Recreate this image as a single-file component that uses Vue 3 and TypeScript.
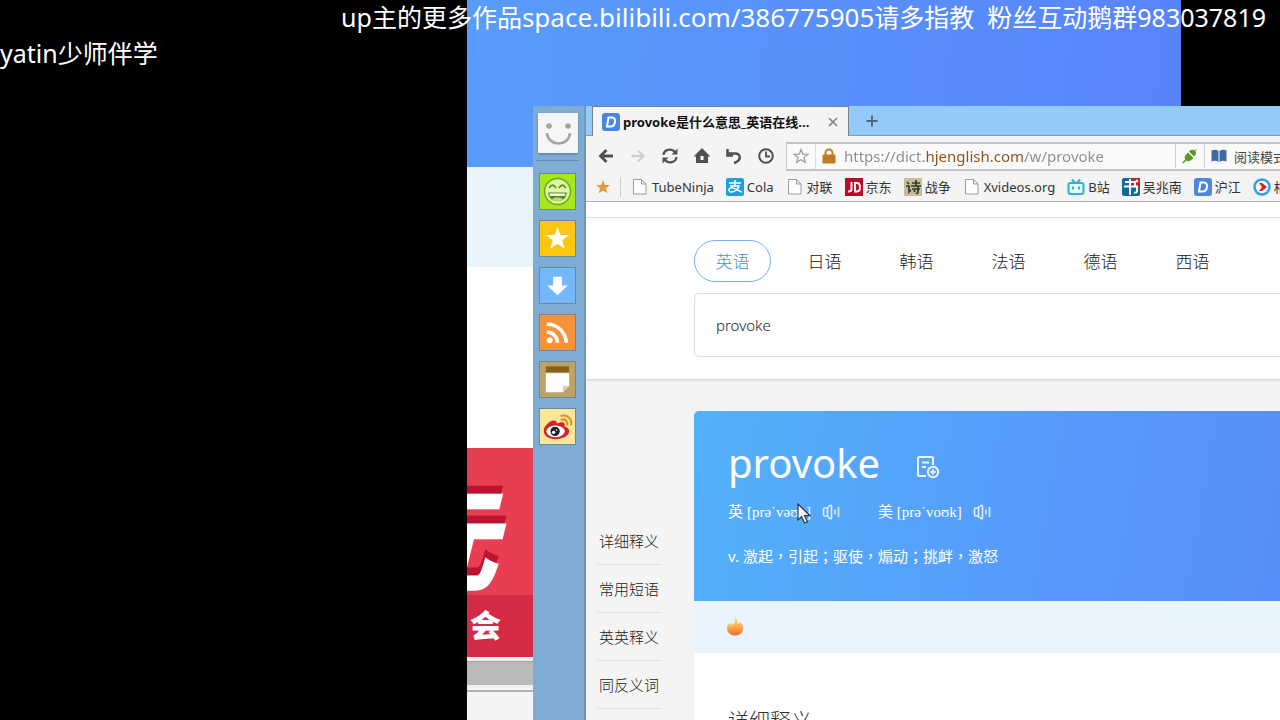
<script setup lang="ts">
import { ref } from 'vue'

interface Bookmark {
  icon: string
  label: string
}

const bookmarks: Bookmark[] = [
  { icon: 'file', label: 'TubeNinja' },
  { icon: 'pay', label: 'Cola' },
  { icon: 'file', label: '对联' },
  { icon: 'jd', label: '京东' },
  { icon: 'poem', label: '战争' },
  { icon: 'file', label: 'Xvideos.org' },
  { icon: 'tv', label: 'B站' },
  { icon: 'book', label: '吴兆南' },
  { icon: 'dict', label: '沪江' },
  { icon: 'play', label: '相声' },
]

const languages: string[] = ['英语', '日语', '韩语', '法语', '德语', '西语']
const activeLanguage = ref<string>('英语')
const sections: string[] = ['详细释义', '常用短语', '英英释义', '同反义词']
const address = ref<string>('https://dict.hjenglish.com/w/provoke')
const query = ref<string>('provoke')
</script>

<template>
  <div class="desktop">
    <div class="back-window">
      <div class="back-hero"></div>
      <div class="back-band"></div>
      <div class="back-blank"></div>
      <div class="banner">
        <div class="banner-top"><span>元</span></div>
        <div class="banner-bottom">会</div>
      </div>
      <div class="back-scroll"></div>
      <div class="back-foot"></div>
    </div>

    <div class="browser">
      <aside class="rail">
        <button class="avatar" aria-label="账户">
          <svg viewBox="0 0 40 40" width="40" height="40">
            <circle cx="11" cy="13" r="2.800" fill="#a5a5a5" /><circle cx="30" cy="13" r="2.800" fill="#a5a5a5" />
            <path d="M9 20c1 14 22 14 23 0" fill="none" stroke="#a5a5a5" stroke-width="2.600" />
          </svg>
        </button>
        <div class="rail-list">
          <button class="tile lime" aria-label="笑脸">
            <svg viewBox="0 0 36 36">
              <circle cx="18" cy="18" r="13.3" fill="#dff7a4" stroke="#71a823" stroke-width="1.5" />
              <path d="M9.500 14.500q3.500-6 7 0M19.500 14.500q3.500-6 7 0" fill="none" stroke="#5f8c1d" stroke-width="1.700" />
              <path d="M8.500 19h19c0 12-19 12-19 0z" fill="#548a19" />
              <path d="M10 20h16v2.500H10z" fill="#fff" /><path d="M12 26q6-4 12 0-6 4-12 0z" fill="#b9df68" />
            </svg>
          </button>
          <button class="tile yellow" aria-label="收藏">
            <svg viewBox="0 0 36 36"><path d="M18 6l3 8.400h9l-7.200 5.400 2.700 8.700L18 23.300l-7.500 5.200 2.700-8.700L6 14.400h9z" fill="#fff" /></svg>
          </button>
          <button class="tile sky" aria-label="下载">
            <svg viewBox="0 0 36 36"><path d="M13.500 9h9v9h6L18 28 7.500 18h6z" fill="#fff" /></svg>
          </button>
          <button class="tile orange" aria-label="订阅">
            <svg viewBox="0 0 36 36">
              <circle cx="10" cy="26" r="3" fill="#fff" />
              <path d="M7 17.500a11 11 0 0 1 11 11M7 9.500a19.500 19.500 0 0 1 20 19" fill="none" stroke="#fff" stroke-width="3.600" />
            </svg>
          </button>
          <button class="tile tan" aria-label="便签">
            <svg viewBox="0 0 36 36">
              <path d="M6 4.500h24v6H6z" fill="#866319" /><path d="M6 11.500h24v13L23.500 31H6z" fill="#fff" />
              <path d="M30 24.500h-6.500V31z" fill="#d8cdb9" />
            </svg>
          </button>
          <button class="tile cream" aria-label="微博">
            <svg viewBox="0 0 36 36">
              <path d="M4 23c-1-5 7-12 11-11 3 0 2 3 2 3s7-3 8 0c1 2 0 3 0 3s5 1 5 5c0 5-7 8-14 8S4 28 4 23z" fill="#d12329" />
              <ellipse cx="16" cy="23" rx="9.500" ry="6" fill="#fff" />
              <circle cx="15.500" cy="23" r="4.800" fill="#222" /><circle cx="14" cy="24" r="1.700" fill="#fff" /><circle cx="17" cy="21.500" r="0.800" fill="#fff" />
              <path d="M22 11c4-1 6 1 6 5M22 7c6-1.500 11 3 10 9" fill="none" stroke="#df931d" stroke-width="2.200" stroke-linecap="round" />
            </svg>
          </button>
        </div>
      </aside>

      <div class="view">
        <div class="tab-strip">
          <div class="tab">
            <svg class="mark" viewBox="0 0 18 18"><rect width="18" height="18" rx="3" fill="#4c86de" /><path d="M6.500 4.500h3.500c5 0 3.500 9-1.500 9H5z" fill="none" stroke="#fff" stroke-width="2" /></svg>
            <span class="tab-title">provoke是什么意思_英语在线...</span>
            <button class="plain tab-close" aria-label="关闭标签页">
              <svg viewBox="0 0 10 10" width="10" height="10"><path d="M1 1l8 8M9 1l-8 8" stroke="#858585" stroke-width="1.700" /></svg>
            </button>
          </div>
          <button class="plain new-tab" aria-label="新建标签页">
            <svg viewBox="0 0 12 12" width="12" height="12"><path d="M6 0.500v11M0.500 6h11" stroke="#53636f" stroke-width="1.800" /></svg>
          </button>
        </div>

        <div class="toolbar">
          <div class="nav">
            <button class="plain" aria-label="后退"><svg viewBox="0 0 18 18"><path d="M16 9H4M9.500 3L3.500 9l6 6" fill="none" stroke="#505050" stroke-width="2.800" /></svg></button>
            <button class="plain" aria-label="前进"><svg viewBox="0 0 18 18"><path d="M2.500 9H14M9 3.500L14.500 9 9 14.500" fill="none" stroke="#cfcfcf" stroke-width="2.300" /></svg></button>
            <button class="plain" aria-label="刷新"><svg viewBox="0 0 18 18"><path d="M2.500 8c.5-5.500 8-7 11.500-3M15.500 10c-.5 5.500-8 7-11.500 3" fill="none" stroke="#505050" stroke-width="2.300" /><path d="M16.500 1.500v6h-6zM1.500 16.500v-6h6z" fill="#505050" /></svg></button>
            <button class="plain" aria-label="主页"><svg viewBox="0 0 18 18"><path d="M9 1L0.500 9.500H3V16h12V9.500h2.500z" fill="#505050" /><path d="M7.500 9h3v4h-3z" fill="#f4f4f4" /></svg></button>
            <button class="plain" aria-label="撤销"><svg viewBox="0 0 18 18"><path d="M3 6.500h7c6.500 0 6.500 7-1 9.500" fill="none" stroke="#505050" stroke-width="2.500" /><path d="M2.500 2v6.500H8" fill="none" stroke="#505050" stroke-width="2.500" /></svg></button>
            <button class="plain" aria-label="历史"><svg viewBox="0 0 18 18"><circle cx="9" cy="9" r="6.800" fill="none" stroke="#505050" stroke-width="2" /><path d="M9 4.500V9.500h4" fill="none" stroke="#505050" stroke-width="1.800" /></svg></button>
          </div>
          <div class="address">
            <button class="plain fav" aria-label="收藏此页"><svg viewBox="0 0 16 16" width="16" height="16"><path d="M8 1.500l1.800 4.700 5 .2-3.900 3.100 1.300 4.900L8 11.700l-4.200 2.700 1.300-4.900-3.900-3.100 5-.2z" fill="none" stroke="#a0a0a0" stroke-width="1.300" /></svg></button>
            <svg class="lock" viewBox="0 0 14 16" width="14" height="16"><path d="M3.500 8V5a3.500 3.500 0 0 1 7 0v3" fill="none" stroke="#c07c22" stroke-width="2" /><rect x="0.500" y="6.500" width="13" height="9" rx="1" fill="#c07c22" /></svg>
            <input v-model="address" class="url" type="text" aria-label="网址" spellcheck="false" />
            <span class="plug"><svg viewBox="0 0 16 16" width="16" height="16"><path d="M15.500 0.500l-3 2c-2.500-1.500-4.500 0-5.500 1l5 5c1.500-1.500 3-3 1.300-5.300zM6 4.500l5.500 5.500C9.500 12 6.500 14.500 4.300 12.500L1.300 15.500l-1-1L3.200 11.500C1.500 9 4.500 6 6 4.500z" fill="#5c9b20" /></svg></span>
            <button class="plain reader">
              <svg viewBox="0 0 16 14" width="16" height="14"><path d="M0.500 1.500q4-1.500 7 .5v11q-3-2-7-.5zM15.500 1.500q-4-1.500-7 .5v11q3-2 7-.5z" fill="#3f6ba3" /></svg>
              阅读模式
            </button>
          </div>
        </div>

        <nav class="bookmarks">
          <button class="plain all-marks" aria-label="书签"><svg viewBox="0 0 14 14" width="14" height="14"><path d="M7 0l1.900 4.900 5.100.2-4 3.200 1.400 5L7 10.500l-4.400 2.800 1.400-5L0 5.100l5.100-.2z" fill="#e39c3b" /></svg></button>
          <a v-for="b in bookmarks" :key="b.label" class="bookmark" href="#">
            <svg class="mark" viewBox="0 0 18 18">
              <path v-if="b.icon === 'file'" d="M2.500 1.500h8l4.500 4.500v10h-12.500zM10.500 1.500v4.500h4.500" fill="#fff" stroke="#9c9c9c" />
              <template v-else-if="b.icon === 'pay'"><rect width="18" height="18" rx="2" fill="#1ba1de" /><path d="M3 5h12M9 2v6M4 8h9c-1 3-4 6-8 6-4-1-2-5 2-4s5 3 9 4" fill="none" stroke="#fff" stroke-width="1.500" /></template>
              <template v-else-if="b.icon === 'jd'"><rect width="18" height="18" fill="#bd0a2c" /><path d="M6.500 4v7.500q0 2-3.500 2M10 4v9.500h2c4 0 4-8.500 0-8.500h-2" fill="none" stroke="#fff" stroke-width="1.900" /></template>
              <template v-else-if="b.icon === 'poem'"><rect width="18" height="18" fill="#c9bd99" /><path d="M3 4l2 2M2 8h3v6l2-2M8 5h8M12 2v6M7 8h10M8 11h8M14 8v6q0 2-2 1M10 12l1 2" fill="none" stroke="#2f3c2a" stroke-width="1.700" /></template>
              <template v-else-if="b.icon === 'tv'"><path d="M5 1.500l3 3.500M13 1.500L10 5" stroke="#2bb3d6" stroke-width="2" /><rect x="1.500" y="5" width="15" height="11" rx="2" fill="#e9fbff" stroke="#2bb3d6" stroke-width="2" /><path d="M6 8.500v3M12 8.500v3" stroke="#2bb3d6" stroke-width="2" /></template>
              <template v-else-if="b.icon === 'book'"><rect width="18" height="18" rx="2" fill="#14699b" /><path d="M10 0h8v9h-8z" fill="#c8202b" /><path d="M3 4h10v4M2 8.500h13v5q0 1.500-3 1M8 1v16M14 2l2 2" fill="none" stroke="#fff" stroke-width="1.900" /></template>
              <template v-else-if="b.icon === 'dict'"><rect width="18" height="18" rx="3" fill="#4c86de" /><path d="M6.500 4.500h3.500c5 0 3.500 9-1.500 9H5z" fill="none" stroke="#fff" stroke-width="2" /></template>
              <template v-else><circle cx="9" cy="9" r="7.500" fill="#fff" stroke="#2f9fe8" stroke-width="2.500" /><path d="M6 5h3l5 4-5 4H6l3-4z" fill="#e01b22" /></template>
            </svg>
            <span>{{ b.label }}</span>
          </a>
        </nav>

        <div class="page">
          <header class="search-head">
            <div class="languages">
              <button v-for="l in languages" :key="l" class="language" :class="{ active: l === activeLanguage }" @click="activeLanguage = l">{{ l }}</button>
            </div>
            <input v-model="query" class="query" type="text" aria-label="查询单词" spellcheck="false" />
          </header>
          <div class="body">
            <nav class="sections">
              <a v-for="s in sections" :key="s" href="#">{{ s }}</a>
            </nav>
            <main class="entry">
              <section class="word-card">
                <div class="word-row">
                  <h1>provoke</h1>
                  <button class="plain" aria-label="添加到生词本">
                    <svg viewBox="0 0 24 24" width="24" height="24" fill="none" stroke="#e8f4ff" stroke-width="2"><path d="M10 21H3.500Q2 21 2 19.500V3.500Q2 2 3.500 2h12Q17 2 17 3.500V10M6 7.500h7M6 12h4" /><circle cx="17" cy="17" r="5.200" /><path d="M17 14.300v5.400M14.300 17h5.400" /></svg>
                  </button>
                </div>
                <div class="sounds">
                  <div class="sound">
                    <span>英 <span class="ipa">[prəˈvəʊk]</span></span>
                    <button class="plain" aria-label="英式发音"><svg viewBox="0 0 18 16" width="18" height="16" fill="none" stroke="#dceeff" stroke-width="1.600"><path d="M5 4H3Q1.500 4 1.500 5.500v5Q1.500 12 3 12h2l3 2.500q1.500.5 1.500-1v-11q0-1.500-1.500-1zM5.500 4v8M13 5.500v5M16.500 3v10" /></svg></button>
                  </div>
                  <div class="sound">
                    <span>美 <span class="ipa">[prəˈvoʊk]</span></span>
                    <button class="plain" aria-label="美式发音"><svg viewBox="0 0 18 16" width="18" height="16" fill="none" stroke="#dceeff" stroke-width="1.600"><path d="M5 4H3Q1.500 4 1.500 5.500v5Q1.500 12 3 12h2l3 2.500q1.500.5 1.500-1v-11q0-1.500-1.500-1zM5.500 4v8M13 5.500v5M16.500 3v10" /></svg></button>
                  </div>
                </div>
                <p class="meaning">v. 激起，引起；驱使，煽动；挑衅，激怒</p>
              </section>
              <div class="hot">
                <svg viewBox="0 0 18 20" width="18" height="20">
                  <defs><linearGradient id="flame" x1="0" y1="0" x2="0" y2="1"><stop offset="0" stop-color="#ffe27a" /><stop offset="0.500" stop-color="#ffb04d" /><stop offset="1" stop-color="#f26a2e" /></linearGradient></defs>
                  <path d="M3 6q1 1 1.500 3Q5 6.500 6 5.500 7 7 7 8.500 9 5 9.500 0 12 3 12 7.500L14.500 5Q17.500 8 17 12C16.500 16.500 13 18.500 9 18.500S1.500 16 1 12Q1 8.500 3 6z" fill="url(#flame)" />
                </svg>
              </div>
              <section class="details"><h2>详细释义</h2></section>
            </main>
          </div>
        </div>
      </div>
    </div>

    <div class="caption caption-top">up主的更多作品<span class="link">space.bilibili.com/386775905</span>请多指教&nbsp; 粉丝互动鹅群983037819</div>
    <div class="caption caption-left">yatin少师伴学</div>
    <svg class="pointer" viewBox="0 0 14 22" width="14" height="22"><path d="M1 1v16l3.500-3.200L7.500 20l3-1.300-3-6H13z" fill="#f2f4f8" stroke="#2d3440" stroke-width="1.200" /></svg>
  </div>
</template>

<style>
html,
body {
  background: #000;
}
</style>

<style scoped>
* {
  box-sizing: border-box;
}
.desktop {
  position: relative;
  height: 100vh;
  overflow: hidden;
  background: #000;
  color: #333;
  font-family: "Noto Sans", "Noto Sans CJK SC", sans-serif;
}
button,
input {
  font-family: inherit;
}
.plain {
  display: inline-flex;
  align-items: center;
  padding: 0;
  border: 0;
  background: none;
}
a {
  color: inherit;
  text-decoration: none;
}
svg {
  display: block;
  flex: none;
}

.back-window {
  position: absolute;
  inset: 0 99px 0 467px;
  display: flex;
  flex-direction: column;
  overflow: hidden;
  background: #f4f4f4;
}
.back-window > div {
  flex: none;
}
.back-hero {
  height: 167px;
  background: linear-gradient(94deg, #589cfa, #5884fa);
}
.back-band {
  height: 100px;
  background: #e8f4fe;
}
.back-blank {
  height: 181px;
  background: #fff;
}
.banner {
  color: #fff;
  font-weight: 900;
}
.banner-top {
  display: flex;
  align-items: flex-end;
  height: 147px;
  overflow: hidden;
  background: #e83e52;
  font-size: 112px;
  font-style: italic;
  line-height: 112px;
  text-shadow: 0 -8px #bd1230;
}
.banner-top span {
  margin-left: -82px;
}
.banner-bottom {
  height: 62px;
  padding-left: 3px;
  background: #d42a46;
  font-size: 31px;
  line-height: 60px;
}
.back-scroll {
  height: 30px;
  border: solid #eee;
  border-width: 4px 0 2px;
  background: #bababa;
  box-shadow: inset 0 1px #a4a4a4;
}
.back-foot {
  height: 5px;
  border-bottom: 2px solid #b2b2b2;
}

.browser {
  position: absolute;
  inset: 106px 0 0 533px;
  display: grid;
  grid-template-columns: 53px minmax(0, 1fr);
  overflow: hidden;
}
.rail {
  display: flex;
  flex-direction: column;
  align-items: center;
  padding: 7px 5px 0 3px;
  border-right: 2px solid #6f97b8;
  background: #7eacd3;
}
.avatar {
  width: 40px;
  height: 40px;
  padding: 0;
  border: 0;
  background: #f5f5f5;
  box-shadow: 0 1px 2px #527899;
}
.rail-list {
  display: flex;
  flex-direction: column;
  align-items: center;
  gap: 10px;
  align-self: stretch;
  margin-top: 7px;
  padding-top: 12px;
  border-top: 1px solid #628cad;
}
.tile {
  width: 37px;
  height: 37px;
  padding: 0;
  border: 1px solid #69889c;
}
.lime { background: #a8e61d; }
.yellow { background: #fac710; }
.sky { background: #74b8fb; }
.orange { background: #f69338; }
.tan { background: #bfa266; }
.cream { background: #fce698; }

.view {
  display: flex;
  flex-direction: column;
  overflow: hidden;
  background: #f4f4f4;
}
.tab-strip {
  display: flex;
  flex: none;
  height: 30px;
  padding-left: 6px;
  background: #94caf8;
  box-shadow: inset 0 -1px #6f9fc6;
}
.tab {
  display: flex;
  align-items: center;
  width: 257px;
  padding: 0 10px 0 9px;
  border: solid #77828b;
  border-width: 1px 1px 0;
  background: #f4f4f4;
}
.mark {
  width: 18px;
  height: 18px;
}
.tab-title {
  flex: 1;
  margin-left: 3px;
  color: #111;
  font-size: 13px;
  font-weight: 700;
  white-space: nowrap;
}
.new-tab {
  margin-left: 17px;
}
.toolbar {
  display: flex;
  flex: none;
  align-items: center;
  height: 36px;
  padding-top: 4px;
}
.nav {
  display: flex;
  flex: none;
  gap: 14px;
  padding: 0 11px 0 11px;
}
.nav svg {
  width: 18px;
  height: 18px;
}
.address {
  display: flex;
  flex: 1;
  align-items: center;
  height: 29px;
  border: solid #c4c4c4;
  border-width: 2px 0 2px 1px;
  background: #fafafa;
}
.fav {
  align-self: stretch;
  padding: 0 6px;
  border-right: 1px solid #ddd;
}
.lock {
  margin: 0 8px 0 6px;
}
.url {
  flex: 1;
  min-width: 0;
  padding: 0;
  border: 0;
  outline: 0;
  background: linear-gradient(to right, #8d8d8d 82px, #8a5118 82px 180px, #8d8d8d 180px);
  background-clip: text;
  color: transparent;
  font-size: 15px;
  line-height: 22px;
}
.plug {
  padding: 4px 6px;
  border: solid #ccc;
  border-width: 0 1px;
}
.reader {
  flex: none;
  gap: 7px;
  width: 75px;
  padding-left: 6px;
  overflow: hidden;
  color: #444;
  font-size: 13px;
  white-space: nowrap;
}
.bookmarks {
  display: flex;
  flex: none;
  align-items: center;
  gap: 12px;
  height: 30px;
  overflow: hidden;
  border-bottom: 1px solid #b5b5b5;
  color: #333;
  font-size: 13px;
  white-space: nowrap;
}
.all-marks {
  height: 20px;
  margin-right: -2px;
  padding: 0 10px;
  border-right: 1px solid #ccc;
}
.bookmark {
  display: flex;
  flex: none;
  align-items: center;
  gap: 3px;
}
.page {
  flex: 1;
  overflow: hidden;
}
.search-head {
  padding: 23px 0 22px 108px;
  background: #fff;
  border-top: 15px solid #fff;
  box-shadow: 0 1px 3px #ccc, inset 0 1px #ddd;
}
.languages {
  display: flex;
  gap: 15px;
  margin-bottom: 11px;
}
.language {
  width: 77px;
  height: 42px;
  padding: 0 0 2px;
  border: 1px solid transparent;
  border-radius: 21px;
  background: none;
  color: #222;
  font-size: 17px;
  font-weight: 300;
}
.language.active {
  border-color: #76b2f3;
  color: #3c92ef;
}
.query {
  display: block;
  width: 100%;
  height: 64px;
  padding: 0 21px;
  border: 1px solid #ddd;
  border-right: 0;
  border-radius: 5px 0 0 5px;
  outline: 0;
  background: #fff;
  color: #222;
  font-size: 15px;
  font-weight: 300;
}
.body {
  display: grid;
  grid-template-columns: 64px minmax(0, 1fr);
  gap: 33px;
  padding: 32px 0 0 11px;
}
.sections {
  display: flex;
  flex-direction: column;
  padding-top: 106px;
}
.sections a {
  height: 48px;
  border-bottom: 1px solid #ddd;
  color: #222;
  font-size: 15px;
  font-weight: 300;
  line-height: 48px;
  text-align: center;
}
.word-card {
  height: 190px;
  padding: 27px 34px 0;
  border-radius: 5px 0 0;
  background: linear-gradient(100deg, #53b1fa, #5798fc 65%, #588ffa);
  color: #fff;
}
.word-row {
  display: flex;
  align-items: center;
  gap: 36px;
}
h1,
h2,
p {
  margin: 0;
  font-weight: 400;
}
h1 {
  font-size: 40px;
  line-height: 50px;
}
.word-row svg {
  margin-top: 8px;
}
.sounds {
  display: flex;
  gap: 38px;
  margin-top: 11px;
  font-size: 15px;
  line-height: 24px;
}
.sound {
  display: flex;
  align-items: center;
  gap: 11px;
}
.ipa {
  font-family: "Liberation Serif", "DejaVu Serif", serif;
}
.meaning {
  margin-top: 20px;
  font-family: "Noto Sans", "Noto Sans CJK TC", sans-serif;
  font-size: 15px;
  line-height: 24px;
  white-space: nowrap;
}
.hot {
  display: flex;
  align-items: center;
  height: 52px;
  padding-left: 32px;
  background: #e9f4fe;
}
.details {
  height: 200px;
  padding: 52px 34px;
  background: #fff;
}
h2 {
  font-size: 21px;
  font-weight: 300;
  line-height: 30px;
}

.caption {
  position: absolute;
  color: #fff;
  font-size: 25px;
  line-height: 34px;
  white-space: nowrap;
}
.caption-top {
  top: 0;
  right: 14px;
}
.caption .link {
  font-size: 26px;
}
.caption-left {
  top: 36px;
  left: 0;
}
.pointer {
  position: absolute;
  top: 503px;
  left: 797px;
}
</style>
